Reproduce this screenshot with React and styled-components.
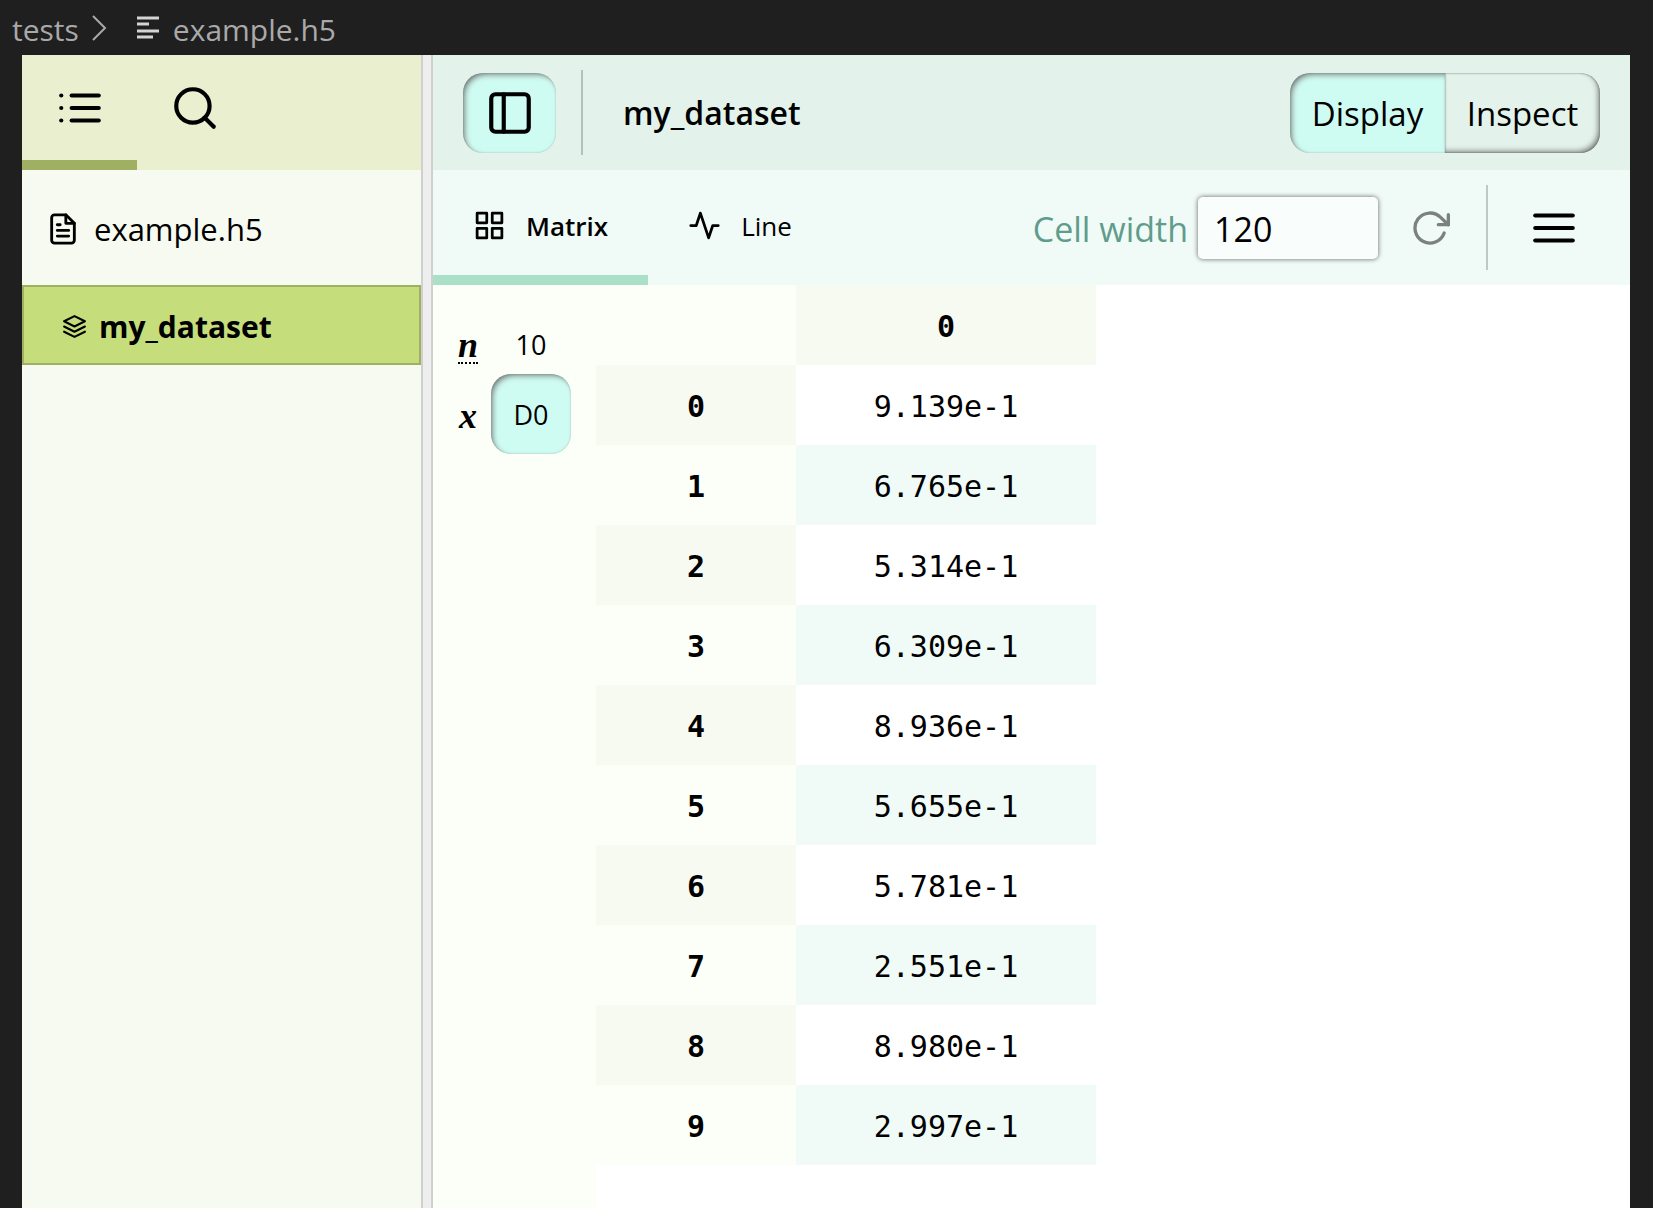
import React, { useState } from 'react';
import styled, { createGlobalStyle } from 'styled-components';
import {
    FiActivity,
    FiFileText,
    FiGrid,
    FiLayers,
    FiList,
    FiMenu,
    FiRotateCw,
    FiSearch,
    FiSidebar,
} from 'react-icons/fi';

const values = [
    '9.139e-1',
    '6.765e-1',
    '5.314e-1',
    '6.309e-1',
    '8.936e-1',
    '5.655e-1',
    '5.781e-1',
    '2.551e-1',
    '8.980e-1',
    '2.997e-1',
];

const pressed = 'inset 3px 3px 6px -2px #696969, inset 0 0 2px rgba(105, 105, 105, 0.4)';
const raised = 'inset -3px -3px 6px -2px #696969, inset 0 0 2px #696969';

const GlobalStyle = createGlobalStyle`
    * {
        box-sizing: border-box;
    }

    body {
        margin: 0;
        background-color: #1f1f1f;
        color: #000;
        font-family: "Open Sans", "Noto Sans", sans-serif;
    }

    button, input {
        color: inherit;
        font-family: inherit;
    }

    button {
        padding: 0;
        border: none;
        background: none;
        cursor: pointer;
    }

    svg {
        display: block;
        flex-shrink: 0;
    }
`;

const Page = styled.div`
    min-height: 100vh;
    display: flex;
    flex-direction: column;
`;

const Breadcrumbs = styled.nav`
    height: 55px;
    padding: 4px 12px 0;
    display: flex;
    align-items: center;
    color: #a9a9a9;
    font-size: 30px;
`;

const Crumb = styled.a`
    color: inherit;
    text-decoration: none;
`;

const Chevron = styled.svg`
    width: 16px;
    height: 28px;
    margin: 0 30px 4px 12px;
`;

const Lines = styled.svg`
    width: 22px;
    height: 24px;
    margin: 0 14px 4px 0;
`;

const Viewer = styled.div`
    flex: 1;
    margin: 0 23px 0 22px;
    display: flex;
`;

const Explorer = styled.aside`
    flex: 0 0 399px;
    background-color: #f7faf0;
`;

const ExplorerTabs = styled.div`
    height: 115px;
    display: flex;
    background-color: #eaf0cf;
`;

const ExplorerTab = styled.button`
    width: 115px;
    display: flex;
    align-items: center;
    justify-content: center;
    border-bottom: 10px solid ${props => (props.$active ? '#9fb062' : 'transparent')};
    font-size: 50px;
`;

const FileButton = styled.button`
    width: 100%;
    height: 115px;
    padding: 2px 24px 0;
    display: flex;
    align-items: center;
    gap: 14px;
    font-size: 31px;
    font-weight: 500;

    svg {
        width: 34px;
        height: 34px;
    }
`;

const TreeItem = styled.button`
    width: 100%;
    height: 80px;
    padding: 2px 38px 0;
    display: flex;
    align-items: center;
    gap: 12px;
    border: 2px solid #9fb062;
    background-color: #c6dd7b;
    font-size: 30px;
    font-weight: 700;

    svg {
        width: 25px;
        height: 25px;
    }
`;

const Splitter = styled.div`
    flex: 0 0 12px;
    border: solid #d0d0d0;
    border-width: 0 2px;
    background-color: #eee;
    cursor: col-resize;
`;

const Main = styled.main`
    flex: 1;
    min-width: 0;
    display: flex;
    flex-direction: column;
    background-color: #fff;
`;

const Bar = styled.div`
    height: 115px;
    padding: 0 30px;
    display: flex;
    align-items: center;
    background-color: #e3f3eb;
`;

const SidebarToggle = styled.button`
    width: 93px;
    height: 80px;
    margin: 1px 25px 0 0;
    display: flex;
    align-items: center;
    justify-content: center;
    border-radius: 20px;
    background-color: #cffcf2;
    box-shadow: ${pressed};
    font-size: 50px;
`;

const Separator = styled.div`
    width: 2px;
    height: 85px;
    background-color: rgba(0, 0, 0, 0.2);
`;

const Title = styled.h1`
    flex: 1;
    margin: 0 40px;
    font-size: 32px;
    font-weight: 600;
`;

const Segments = styled.div`
    width: 310px;
    height: 80px;
    margin-top: 1px;
    display: flex;
`;

const Segment = styled.button`
    flex: 1;
    background-color: ${props => (props.$active ? '#cffcf2' : 'transparent')};
    box-shadow: ${props => (props.$active ? pressed : raised)};
    border-radius: ${props => (props.$active ? '20px 0 0 20px' : '0 20px 20px 0')};
    font-size: 33px;
`;

const VisBar = styled(Bar)`
    padding: 0 51px 0 0;
    background-color: #f0faf7;
`;

const VisTabs = styled.div`
    flex: 1;
    align-self: stretch;
    display: flex;
`;

const VisTab = styled.button`
    padding: 6px 40px 0;
    display: flex;
    align-items: center;
    gap: 20px;
    border-bottom: 10px solid ${props => (props.$active ? '#aadfc8' : 'transparent')};
    font-size: 26px;
    font-weight: ${props => (props.$active ? 600 : 400)};

    svg {
        width: 33px;
        height: 33px;
    }
`;

const CellWidthLabel = styled.label`
    margin-right: 10px;
    padding-top: 3px;
    color: #5f9c8b;
    font-size: 34px;
`;

const CellWidthInput = styled.input`
    width: 180px;
    height: 62px;
    margin-right: 32px;
    padding: 3px 16px 0;
    border: none;
    border-radius: 5px;
    background-color: #f9fdfc;
    box-shadow: 0 0 5px rgba(0, 0, 0, 0.6);
    font-size: 34px;
`;

const ResetButton = styled.button`
    margin-right: 36px;
    color: #7c8180;
    font-size: 40px;
`;

const MenuButton = styled.button`
    margin-left: 41px;
    font-size: 50px;
`;

const VisArea = styled.div`
    flex: 1;
    display: flex;
`;

const Dimensions = styled.div`
    flex: 0 0 163px;
    padding: 29px 25px 0 23px;
    display: grid;
    grid-template-columns: 24px 80px;
    grid-template-rows: 60px 80px;
    column-gap: 11px;
    align-items: center;
    justify-items: center;
    background-color: #fcfff7;
    font-size: 27px;
`;

const DimLabel = styled.abbr`
    padding-top: 4px;
    border-bottom: 2px ${props => (props.title ? 'dotted' : 'none')} #000;
    font-family: "Liberation Serif", serif;
    font-size: 36px;
    font-weight: 700;
    font-style: italic;
    line-height: 34px;
    text-decoration: none;
`;

const DimButton = styled.button`
    width: 80px;
    height: 80px;
    border-radius: 20px;
    background-color: #cffcf2;
    box-shadow: ${pressed};
    font-size: 27px;
`;

const Matrix = styled.table`
    align-self: flex-start;
    border-collapse: collapse;
    table-layout: fixed;
    width: 500px;
    font-family: "DejaVu Sans Mono", monospace;
    font-size: 30px;
`;

const HeaderCell = styled.th`
    height: 80px;
    padding: 2px 0 0;
    background-color: ${props => (props.$shaded ? '#f7faf0' : '#fcfff7')};
    font-weight: 700;
`;

const CornerCell = styled.td`
    width: 200px;
    padding: 0;
    background-color: #fcfff7;
`;

const ValueCell = styled.td`
    height: 80px;
    padding: 2px 0 0;
    background-color: ${props => (props.$shaded ? '#f0faf7' : '#fff')};
    text-align: center;
`;

const App = () => {
    const [cellWidth, setCellWidth] = useState('120');

    return (
        <Page>
            <GlobalStyle />
            <Breadcrumbs aria-label="Breadcrumbs">
                <Crumb href="#tests">tests</Crumb>
                <Chevron viewBox="0 0 16 28" fill="none" stroke="currentColor" strokeWidth="2">
                    <path d="M2 2L14 14L2 26" />
                </Chevron>
                <Lines viewBox="0 0 22 24" fill="none" stroke="#d4d4d4" strokeWidth="3">
                    <path d="M0 2H22M0 8H12M0 15H22M0 21H16" />
                </Lines>
                <Crumb href="#example">example.h5</Crumb>
            </Breadcrumbs>

            <Viewer>
                <Explorer>
                    <ExplorerTabs role="tablist">
                        <ExplorerTab role="tab" aria-selected="true" aria-label="Explore" $active>
                            <FiList />
                        </ExplorerTab>
                        <ExplorerTab role="tab" aria-selected="false" aria-label="Search">
                            <FiSearch />
                        </ExplorerTab>
                    </ExplorerTabs>
                    <FileButton><FiFileText />example.h5</FileButton>
                    <TreeItem><FiLayers />my_dataset</TreeItem>
                </Explorer>

                <Splitter />

                <Main>
                    <Bar>
                        <SidebarToggle aria-label="Toggle sidebar" aria-pressed="true">
                            <FiSidebar />
                        </SidebarToggle>
                        <Separator />
                        <Title>my_dataset</Title>
                        <Segments>
                            <Segment aria-pressed="true" $active>Display</Segment>
                            <Segment aria-pressed="false">Inspect</Segment>
                        </Segments>
                    </Bar>

                    <VisBar>
                        <VisTabs role="tablist">
                            <VisTab role="tab" aria-selected="true" $active><FiGrid />Matrix</VisTab>
                            <VisTab role="tab" aria-selected="false"><FiActivity />Line</VisTab>
                        </VisTabs>
                        <CellWidthLabel htmlFor="cell-width">Cell width</CellWidthLabel>
                        <CellWidthInput
                            id="cell-width"
                            value={cellWidth}
                            onChange={(e) => setCellWidth(e.target.value)}
                        />
                        <ResetButton aria-label="Reset" onClick={() => setCellWidth('120')}>
                            <FiRotateCw />
                        </ResetButton>
                        <Separator />
                        <MenuButton aria-label="Menu"><FiMenu /></MenuButton>
                    </VisBar>

                    <VisArea>
                        <Dimensions>
                            <DimLabel title="Number of elements">n</DimLabel>
                            <span>10</span>
                            <DimLabel>x</DimLabel>
                            <DimButton aria-pressed="true">D0</DimButton>
                        </Dimensions>
                        <Matrix>
                            <thead>
                                <tr>
                                    <CornerCell />
                                    <HeaderCell scope="col" $shaded>0</HeaderCell>
                                </tr>
                            </thead>
                            <tbody>
                                {values.map((value, i) => (
                                    <tr key={value}>
                                        <HeaderCell scope="row" $shaded={i % 2 === 0}>{i}</HeaderCell>
                                        <ValueCell $shaded={i % 2 === 1}>{value}</ValueCell>
                                    </tr>
                                ))}
                            </tbody>
                        </Matrix>
                    </VisArea>
                </Main>
            </Viewer>
        </Page>
    );
};

export default App;
